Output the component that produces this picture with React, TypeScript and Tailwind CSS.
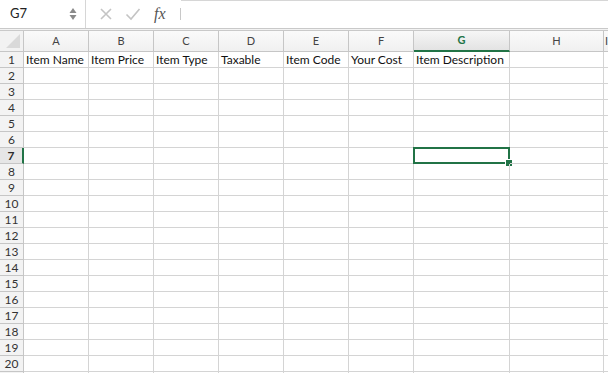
import React from "react";

const cols = [
  { l: "A", w: 65, t: "Item Name" },
  { l: "B", w: 65, t: "Item Price" },
  { l: "C", w: 65, t: "Item Type" },
  { l: "D", w: 65, t: "Taxable" },
  { l: "E", w: 65, t: "Item Code" },
  { l: "F", w: 65, t: "Your Cost" },
  { l: "G", w: 96, t: "Item Description" },
  { l: "H", w: 94, t: "" },
  { l: "I", w: 40, t: "" },
];

const rows = Array.from({ length: 21 }, (_, i) => i + 1);

export default function App() {
  return (
    <div
      className="w-[608px] h-[373px] overflow-hidden bg-white"
      style={{ fontFamily: "Lato, 'Open Sans', sans-serif" }}
    >
      {/* toolbar */}
      <div className="flex h-[29px] bg-white border-b border-[#c9c9c9]">
        <div className="w-[86px] flex items-center border-r border-[#d6d6d6] pl-[10px] pr-[6px] relative">
          <span className="text-[13px] text-[#222] flex-1">G7</span>
          <svg width="8" height="16" viewBox="0 0 8 16" className="mr-[2px]">
            <path d="M4 2 L7.5 7 L0.5 7 Z" fill="#8a8a8a" />
            <path d="M4 14 L7.5 9 L0.5 9 Z" fill="#8a8a8a" />
          </svg>
        </div>
        <div className="w-[95px] flex items-center relative">
          <svg width="14" height="14" viewBox="0 0 14 14" className="ml-[13px]">
            <path d="M2 2 L12 12 M12 2 L2 12" stroke="#c4c4c4" strokeWidth="1.6" />
          </svg>
          <svg width="16" height="14" viewBox="0 0 16 14" className="ml-[12px]">
            <path d="M1.5 7.5 L6 12 L14.5 2" stroke="#c4c4c4" strokeWidth="1.6" fill="none" />
          </svg>
          <span
            className="ml-[13px] text-[16px] italic text-[#555]"
            style={{ fontFamily: "'Liberation Serif', 'DejaVu Serif', serif" }}
          >
            fx
          </span>
          <div className="absolute right-0 top-[8px] w-px h-[12px] bg-[#c8c8c8]" />
        </div>
        <div className="flex-1 border-t border-[#d6d6d6] bg-white" />
      </div>
      <div className="h-[2px] border-b border-[#c9c9c9] bg-[#f3f3f3]" />

      {/* header row */}
      <div className="flex h-[21px]">
        <div className="w-[24px] shrink-0 border-r border-b border-[#c6c6c6] bg-[#f2f2f2] relative">
          <svg width="14" height="14" viewBox="0 0 14 14" className="absolute right-[3px] bottom-[3px]">
            <path d="M14 0 L14 14 L0 14 Z" fill="#d9d9d9" />
          </svg>
        </div>
        {cols.map((c) => (
          <div
            key={c.l}
            style={{ width: c.w }}
            className={
              c.l === "G"
                ? "shrink-0 flex items-center justify-center text-[11px] font-bold text-[#217346] border-r border-[#c6c6c6] border-b-2 border-b-[#217346] bg-gradient-to-b from-[#f6f6f6] to-[#e3e3e3]"
                : c.l === "I"
                ? "shrink-0 flex items-center pl-[1px] text-[11px] text-[#444] border-b border-[#c6c6c6] bg-gradient-to-b from-[#fafafa] to-[#f0f0f0]"
                : "shrink-0 flex items-center justify-center text-[11px] text-[#444] border-r border-b border-[#c6c6c6] bg-gradient-to-b from-[#fafafa] to-[#f0f0f0]"
            }
          >
            {c.l}
          </div>
        ))}
      </div>

      {rows.map((r) => (
        <div key={r} className="flex h-[16px]">
          <div
            className={
              r === 7
                ? "w-[24px] shrink-0 flex items-center justify-center text-[12px] font-bold text-[#2b2b2b] bg-[#e6e6e6] border-r-2 border-r-[#217346] border-b border-b-[#c6c6c6]"
                : "w-[24px] shrink-0 flex items-center justify-center text-[12px] text-[#333] bg-[#f3f3f3] border-r border-b border-[#c6c6c6]"
            }
          >
            {r}
          </div>
          {cols.map((c) => (
            <div
              key={c.l}
              style={{ width: c.w }}
              className="shrink-0 relative border-r border-b border-[#d4d4d4] text-[12px] text-[#111] leading-[15px] pl-[2px] whitespace-nowrap overflow-visible"
            >
              {r === 1 ? c.t : ""}
              {r === 7 && c.l === "G" && (
                <>
                  <div className="absolute -left-px -top-px w-[97px] h-[17px] border-2 border-[#217346]" />
                  <div className="absolute right-[-4px] bottom-[-4px] w-[6px] h-[6px] bg-[#217346] border border-white box-content" />
                </>
              )}
            </div>
          ))}
        </div>
      ))}
    </div>
  );
}
